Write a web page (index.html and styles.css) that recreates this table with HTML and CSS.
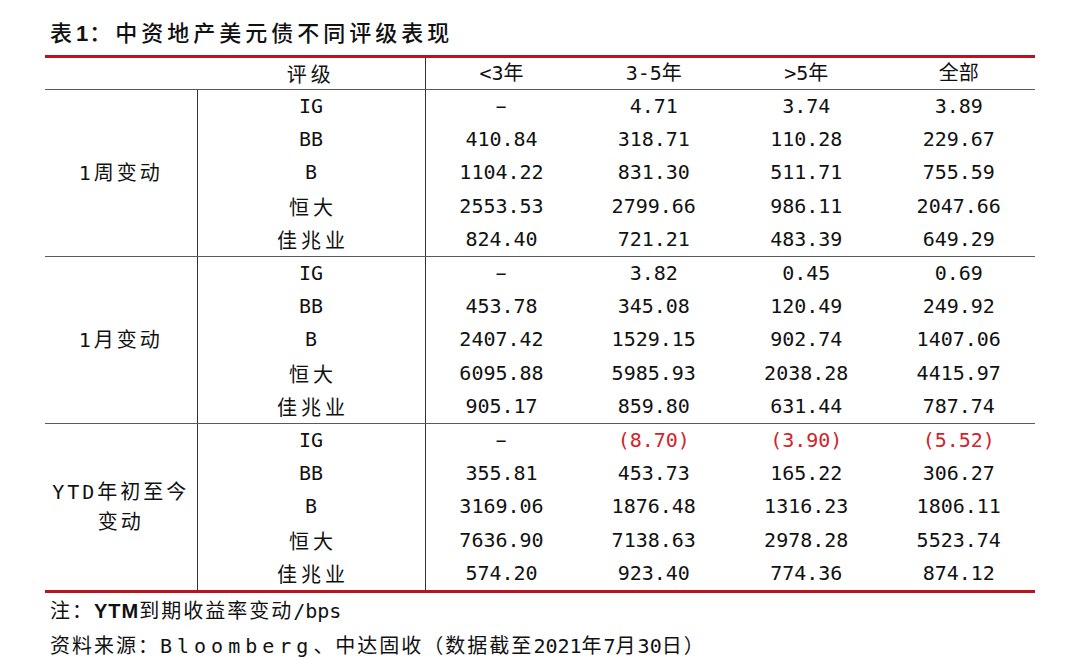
FILE: index.html
```html
<!DOCTYPE html>
<html lang="zh-CN">
<head>
<meta charset="utf-8">
<link rel="stylesheet" href="styles.css">
</head>
<body>
<div class="page">
  <h1 class="title">表<span class="lat">1</span>：中资地产美元债不同评级表现</h1>
  <table class="data">
    <colgroup>
      <col class="c-group"><col class="c-rating"><col class="c-num"><col class="c-num"><col class="c-num"><col class="c-num">
    </colgroup>
    <thead>
      <tr>
        <th class="blank"></th>
        <th class="rating">评级</th>
        <th>&lt;3年</th>
        <th>3-5年</th>
        <th>&gt;5年</th>
        <th>全部</th>
      </tr>
    </thead>
    <tbody>
      <tr><td class="group" rowspan="5">1周变动</td><td class="rating">IG</td><td><span class="dash">-</span></td><td>4.71</td><td>3.74</td><td>3.89</td></tr>
      <tr><td class="rating">BB</td><td>410.84</td><td>318.71</td><td>110.28</td><td>229.67</td></tr>
      <tr><td class="rating">B</td><td>1104.22</td><td>831.30</td><td>511.71</td><td>755.59</td></tr>
      <tr><td class="rating cjk">恒大</td><td>2553.53</td><td>2799.66</td><td>986.11</td><td>2047.66</td></tr>
      <tr class="last"><td class="rating cjk">佳兆业</td><td>824.40</td><td>721.21</td><td>483.39</td><td>649.29</td></tr>
    </tbody>
    <tbody>
      <tr><td class="group" rowspan="5">1月变动</td><td class="rating">IG</td><td><span class="dash">-</span></td><td>3.82</td><td>0.45</td><td>0.69</td></tr>
      <tr><td class="rating">BB</td><td>453.78</td><td>345.08</td><td>120.49</td><td>249.92</td></tr>
      <tr><td class="rating">B</td><td>2407.42</td><td>1529.15</td><td>902.74</td><td>1407.06</td></tr>
      <tr><td class="rating cjk">恒大</td><td>6095.88</td><td>5985.93</td><td>2038.28</td><td>4415.97</td></tr>
      <tr class="last"><td class="rating cjk">佳兆业</td><td>905.17</td><td>859.80</td><td>631.44</td><td>787.74</td></tr>
    </tbody>
    <tbody class="final">
      <tr><td class="group" rowspan="5">YTD年初至今<br>变动</td><td class="rating">IG</td><td><span class="dash">-</span></td><td class="neg">(8.70)</td><td class="neg">(3.90)</td><td class="neg">(5.52)</td></tr>
      <tr><td class="rating">BB</td><td>355.81</td><td>453.73</td><td>165.22</td><td>306.27</td></tr>
      <tr><td class="rating">B</td><td>3169.06</td><td>1876.48</td><td>1316.23</td><td>1806.11</td></tr>
      <tr><td class="rating cjk">恒大</td><td>7636.90</td><td>7138.63</td><td>2978.28</td><td>5523.74</td></tr>
      <tr class="last"><td class="rating cjk">佳兆业</td><td>574.20</td><td>923.40</td><td>774.36</td><td>874.12</td></tr>
    </tbody>
  </table>
  <p class="note">注：<span class="lat bold">YTM</span>到期收益率变动<span class="lat">/bps</span></p>
  <p class="note">资料来源：<span class="lat wide">Bloomberg</span>、中达固收（数据截至<span class="lat">2021</span>年<span class="lat">7</span>月<span class="lat">30</span>日）</p>
</div>
</body>
</html>
```
FILE: styles.css
```css
html, body {
  margin: 0;
  padding: 0;
  background: #ffffff;
}

body {
  font-family: "DejaVu Sans Mono", "Noto Sans CJK SC", monospace;
  color: #111111;
}

.page {
  width: 1080px;
  height: 659px;
  overflow: hidden;
}

.title {
  margin: 0;
  padding: 19px 0 0 50px;
  height: 55px;
  box-sizing: border-box;
  font-family: "Noto Sans CJK SC", sans-serif;
  font-size: 22px;
  line-height: 24px;
  font-weight: 500;
  letter-spacing: 4px;
  color: #111;
}

.title .lat {
  font-family: "Liberation Sans", sans-serif;
  font-weight: 700;
  letter-spacing: 1px;
}

.data {
  margin: 0 0 0 45px;
  width: 990px;
  border-collapse: collapse;
  table-layout: fixed;
  border-top: 3px solid #b8131f;
  border-bottom: 3px solid #b8131f;
}

.c-group { width: 152px; }
.c-rating { width: 228px; }
.c-num { width: 152.5px; }

.data th,
.data td {
  padding: 0;
  text-align: center;
  font-weight: normal;
  font-size: 20px;
  white-space: nowrap;
}

.data thead th {
  height: 31px;
  line-height: 31px;
  font-family: "DejaVu Sans Mono", "Noto Sans CJK SC", monospace;
  border-bottom: 1px solid #5a5a5a;
}

.data thead th.rating {
  font-family: "Noto Sans CJK SC", sans-serif;
  letter-spacing: 4px;
  border-right: 1px solid #333;
}

.data tbody td {
  height: 33.2px;
  line-height: 33px;
}

.data tbody tr.last td {
  border-bottom: 1px solid #5a5a5a;
}

.data tbody.final tr.last td {
  border-bottom: none;
}

.data td.group {
  border-right: 1px solid #333;
  border-bottom: 1px solid #5a5a5a;
  font-family: "DejaVu Sans Mono", "Noto Sans CJK SC", monospace;
  letter-spacing: 3px;
  line-height: 30px;
}

.data tbody.final td.group {
  border-bottom: none;
}

.data td.rating {
  border-right: 1px solid #333;
}

.data td.cjk {
  font-family: "Noto Sans CJK SC", sans-serif;
  letter-spacing: 4px;
  padding-left: 4px;
}

.data td.neg {
  color: #d2232a;
}

.dash {
  display: inline-block;
  transform: scaleX(1.8);
}

.note {
  margin: 0;
  padding-left: 50px;
  font-family: "Noto Sans CJK SC", sans-serif;
  font-size: 20px;
  line-height: 33px;
  letter-spacing: 2px;
  color: #111;
}

.note .lat {
  font-family: "DejaVu Sans Mono", monospace;
  letter-spacing: 0;
}

.note .bold {
  font-family: "Liberation Sans", sans-serif;
  font-weight: 700;
  letter-spacing: 1px;
}

.note .wide {
  letter-spacing: 5px;
}
```
